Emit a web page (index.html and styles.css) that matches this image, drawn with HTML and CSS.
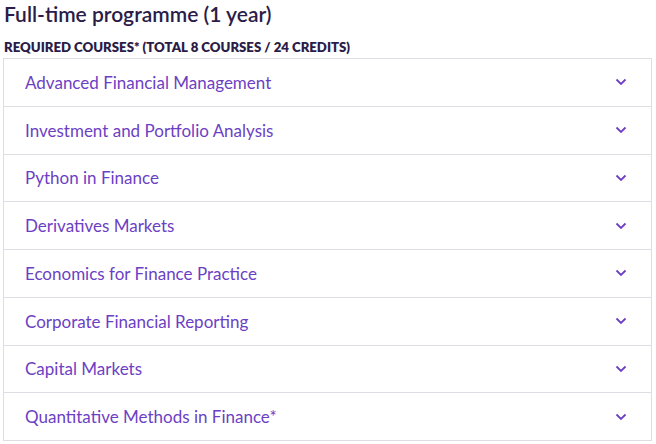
FILE: index.html
```html
<!DOCTYPE html>
<html lang="en">
<head>
<meta charset="utf-8">
<title>Full-time programme</title>
<link rel="stylesheet" href="styles.css">
</head>
<body>
<main class="page">
  <h2 class="title">Full-time programme (1 year)</h2>
  <h3 class="subtitle">REQUIRED COURSES* (TOTAL 8 COURSES / 24 CREDITS)</h3>
  <ul class="accordion">
    <li class="item"><span class="label">Advanced Financial Management</span><svg class="chev" viewBox="0 0 12 8" width="12" height="8"><path d="M1.5 1.5 L6 6 L10.5 1.5" fill="none" stroke="currentColor" stroke-width="1.8"/></svg></li>
    <li class="item"><span class="label">Investment and Portfolio Analysis</span><svg class="chev" viewBox="0 0 12 8" width="12" height="8"><path d="M1.5 1.5 L6 6 L10.5 1.5" fill="none" stroke="currentColor" stroke-width="1.8"/></svg></li>
    <li class="item"><span class="label">Python in Finance</span><svg class="chev" viewBox="0 0 12 8" width="12" height="8"><path d="M1.5 1.5 L6 6 L10.5 1.5" fill="none" stroke="currentColor" stroke-width="1.8"/></svg></li>
    <li class="item"><span class="label">Derivatives Markets</span><svg class="chev" viewBox="0 0 12 8" width="12" height="8"><path d="M1.5 1.5 L6 6 L10.5 1.5" fill="none" stroke="currentColor" stroke-width="1.8"/></svg></li>
    <li class="item"><span class="label">Economics for Finance Practice</span><svg class="chev" viewBox="0 0 12 8" width="12" height="8"><path d="M1.5 1.5 L6 6 L10.5 1.5" fill="none" stroke="currentColor" stroke-width="1.8"/></svg></li>
    <li class="item"><span class="label">Corporate Financial Reporting</span><svg class="chev" viewBox="0 0 12 8" width="12" height="8"><path d="M1.5 1.5 L6 6 L10.5 1.5" fill="none" stroke="currentColor" stroke-width="1.8"/></svg></li>
    <li class="item"><span class="label">Capital Markets</span><svg class="chev" viewBox="0 0 12 8" width="12" height="8"><path d="M1.5 1.5 L6 6 L10.5 1.5" fill="none" stroke="currentColor" stroke-width="1.8"/></svg></li>
    <li class="item"><span class="label">Quantitative Methods in Finance*</span><svg class="chev" viewBox="0 0 12 8" width="12" height="8"><path d="M1.5 1.5 L6 6 L10.5 1.5" fill="none" stroke="currentColor" stroke-width="1.8"/></svg></li>
  </ul>
</main>
</body>
</html>
```
FILE: styles.css
```css
html, body {
  margin: 0;
  padding: 0;
  background: #ffffff;
}
body {
  font-family: Lato, "Open Sans", sans-serif;
}
.page {
  padding: 1px 4px 0 3px;
}
.title {
  margin: 0 0 0 1px;
  font-size: 21px;
  line-height: 26px;
  font-weight: 600;
  color: #2b1c48;
}
.subtitle {
  margin: 13px 0 3px 1px;
  font-size: 13.2px;
  line-height: 15px;
  font-weight: 800;
  color: #2b1c48;
}
.accordion {
  list-style: none;
  margin: 0;
  padding: 0;
  border: 1px solid #dedde3;
  border-bottom: none;
}
.item {
  display: flex;
  align-items: center;
  justify-content: space-between;
  height: 46.75px;
  padding: 0 24px 0 21px;
  border-bottom: 1px solid #dedde3;
}
.label {
  font-size: 17px;
  color: #6c3fc4;
}
.chev {
  color: #6c3fc4;
}
```
